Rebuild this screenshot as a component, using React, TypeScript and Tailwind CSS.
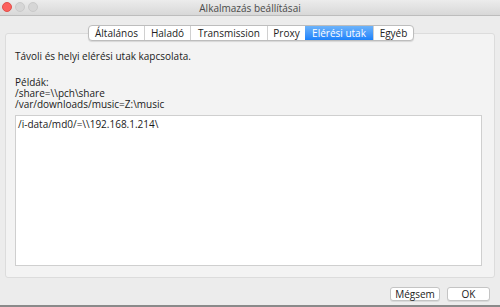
import React from "react";

const font = { fontFamily: '"Open Sans", "DejaVu Sans", sans-serif' };

export default function App() {
  const tabs = [
    { label: "Általános", w: 55 },
    { label: "Haladó", w: 46 },
    { label: "Transmission", w: 77 },
    { label: "Proxy", w: 38 },
    { label: "Elérési utak", w: 68 },
    { label: "Egyéb", w: 40 },
  ];
  return (
    <div className="w-[500px] h-[307px] bg-[#ececec] flex flex-col overflow-hidden text-[#1a1a1a]" style={font}>
      {/* title bar */}
      <div className="h-[16px] relative flex items-center justify-center bg-gradient-to-b from-[#ececec] to-[#d8d8d8] border-b border-[#bdbdbd]">
        <div className="absolute left-[2px] top-[2px] flex gap-[3px]">
          <div className="w-[10px] h-[10px] rounded-full bg-[#fc605c] border border-[#e0504b]" />
          <div className="w-[10px] h-[10px] rounded-full bg-[#d6d6d6] border border-[#cacaca]" />
          <div className="w-[10px] h-[10px] rounded-full bg-[#d6d6d6] border border-[#cacaca]" />
        </div>
        <span className="text-[10px] leading-none text-[#4a4a4a]">Alkalmazás beállításai</span>
      </div>

      {/* content */}
      <div className="relative flex-1 flex flex-col px-[5px] pt-[17px]">
        {/* panel */}
        <div className="h-[245px] bg-[#f3f3f3] border border-[#dcdcdc] rounded-[3px] flex flex-col pt-[14px] px-[9px]">
          <div className="text-[10px] leading-[13px] mt-[2px]">Távoli és helyi elérési utak kapcsolata.</div>
          <div className="text-[10px] leading-[11px] mt-[14px] whitespace-pre-line">
            {"Példák:\n/share=\\\\pch\\share\n/var/downloads/music=Z:\\music"}
          </div>
          <div className="mt-[5px] h-[151px] bg-white border border-[#cfcfcf] w-[467px] px-[2px] pt-[2px]">
            <div className="text-[10px] leading-[13px]">/i-data/md0/=\\192.168.1.214\</div>
          </div>
        </div>

        {/* tabs */}
        <div className="absolute top-[9px] left-[88px] flex h-[16px] rounded-[4px] border border-[#bdbdbd] bg-white shadow-[0_1px_1px_rgba(0,0,0,0.12)] overflow-hidden">
          {tabs.map((t, i) => {
            const sel = t.label === "Elérési utak";
            return (
              <div
                key={t.label}
                style={{ width: t.w }}
                className={
                  "flex items-center justify-center text-[10px] leading-none " +
                  (i > 0 && !sel ? "border-l border-[#d0d0d0] " : "") +
                  (sel ? "bg-gradient-to-b from-[#6cb3fa] to-[#1a82fb] text-white" : "text-[#222]")
                }
              >
                {t.label}
              </div>
            );
          })}
        </div>

        {/* buttons */}
        <div className="flex justify-end gap-[7px] mt-[9px] pr-[5px]">
          <div className="w-[50px] h-[14px] bg-white border border-[#c4c4c4] rounded-[3px] flex items-center justify-center text-[10px] leading-none shadow-[0_1px_0_rgba(0,0,0,0.08)]">Mégsem</div>
          <div className="w-[43px] h-[14px] bg-white border border-[#c4c4c4] rounded-[3px] flex items-center justify-center text-[10px] leading-none shadow-[0_1px_0_rgba(0,0,0,0.08)]">OK</div>
        </div>
      </div>
      <div className="h-[2px] bg-[#8a8a8a]" />
    </div>
  );
}
